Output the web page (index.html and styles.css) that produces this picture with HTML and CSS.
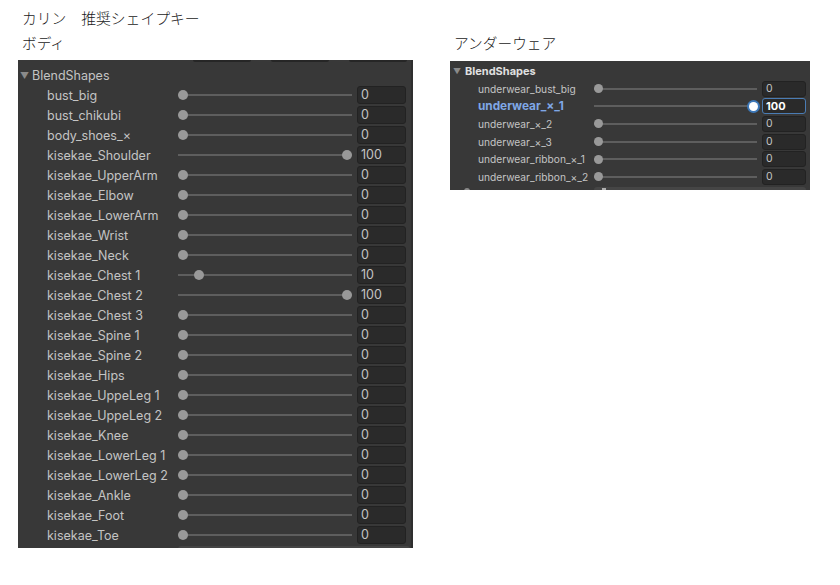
FILE: index.html
```html
<!DOCTYPE html>
<html lang="ja">
<head>
    <meta charset="UTF-8">
    <meta name="viewport" content="width=device-width, initial-scale=1.0">
    <title>カリン 推奨シェイプキー</title>
    <link rel="stylesheet" href="styles.css">
</head>
<body>
    <div class="page">
        <div class="title jp">カリン　推奨シェイプキー</div>
        <div class="columns">
            <!--ボディ-->
            <div class="col col_body">
                <div class="heading jp">ボディ</div>
                <div class="panel panel_body">
                    <div class="cut_top">
                        <span></span><span></span><span></span>
                    </div>
                    <div class="group"><span class="arrow">▼</span>BlendShapes</div>
                    <div class="row"><span class="label">bust_big</span><div class="slider"><div class="rail"><span class="knob" style="left:0%"></span></div></div><span class="field">0</span></div>
                    <div class="row"><span class="label">bust_chikubi</span><div class="slider"><div class="rail"><span class="knob" style="left:0%"></span></div></div><span class="field">0</span></div>
                    <div class="row"><span class="label">body_shoes_×</span><div class="slider"><div class="rail"><span class="knob" style="left:0%"></span></div></div><span class="field">0</span></div>
                    <div class="row"><span class="label">kisekae_Shoulder</span><div class="slider"><div class="rail"><span class="knob" style="left:100%"></span></div></div><span class="field">100</span></div>
                    <div class="row"><span class="label">kisekae_UpperArm</span><div class="slider"><div class="rail"><span class="knob" style="left:0%"></span></div></div><span class="field">0</span></div>
                    <div class="row"><span class="label">kisekae_Elbow</span><div class="slider"><div class="rail"><span class="knob" style="left:0%"></span></div></div><span class="field">0</span></div>
                    <div class="row"><span class="label">kisekae_LowerArm</span><div class="slider"><div class="rail"><span class="knob" style="left:0%"></span></div></div><span class="field">0</span></div>
                    <div class="row"><span class="label">kisekae_Wrist</span><div class="slider"><div class="rail"><span class="knob" style="left:0%"></span></div></div><span class="field">0</span></div>
                    <div class="row"><span class="label">kisekae_Neck</span><div class="slider"><div class="rail"><span class="knob" style="left:0%"></span></div></div><span class="field">0</span></div>
                    <div class="row"><span class="label">kisekae_Chest 1</span><div class="slider"><div class="rail"><span class="knob" style="left:10%"></span></div></div><span class="field">10</span></div>
                    <div class="row"><span class="label">kisekae_Chest 2</span><div class="slider"><div class="rail"><span class="knob" style="left:100%"></span></div></div><span class="field">100</span></div>
                    <div class="row"><span class="label">kisekae_Chest 3</span><div class="slider"><div class="rail"><span class="knob" style="left:0%"></span></div></div><span class="field">0</span></div>
                    <div class="row"><span class="label">kisekae_Spine 1</span><div class="slider"><div class="rail"><span class="knob" style="left:0%"></span></div></div><span class="field">0</span></div>
                    <div class="row"><span class="label">kisekae_Spine 2</span><div class="slider"><div class="rail"><span class="knob" style="left:0%"></span></div></div><span class="field">0</span></div>
                    <div class="row"><span class="label">kisekae_Hips</span><div class="slider"><div class="rail"><span class="knob" style="left:0%"></span></div></div><span class="field">0</span></div>
                    <div class="row"><span class="label">kisekae_UppeLeg 1</span><div class="slider"><div class="rail"><span class="knob" style="left:0%"></span></div></div><span class="field">0</span></div>
                    <div class="row"><span class="label">kisekae_UppeLeg 2</span><div class="slider"><div class="rail"><span class="knob" style="left:0%"></span></div></div><span class="field">0</span></div>
                    <div class="row"><span class="label">kisekae_Knee</span><div class="slider"><div class="rail"><span class="knob" style="left:0%"></span></div></div><span class="field">0</span></div>
                    <div class="row"><span class="label">kisekae_LowerLeg 1</span><div class="slider"><div class="rail"><span class="knob" style="left:0%"></span></div></div><span class="field">0</span></div>
                    <div class="row"><span class="label">kisekae_LowerLeg 2</span><div class="slider"><div class="rail"><span class="knob" style="left:0%"></span></div></div><span class="field">0</span></div>
                    <div class="row"><span class="label">kisekae_Ankle</span><div class="slider"><div class="rail"><span class="knob" style="left:0%"></span></div></div><span class="field">0</span></div>
                    <div class="row"><span class="label">kisekae_Foot</span><div class="slider"><div class="rail"><span class="knob" style="left:0%"></span></div></div><span class="field">0</span></div>
                    <div class="row"><span class="label">kisekae_Toe</span><div class="slider"><div class="rail"><span class="knob" style="left:0%"></span></div></div><span class="field">0</span></div>
                    <div class="cut_bottom"><span></span></div>
                </div>
            </div>
            <!--アンダーウェア-->
            <div class="col col_under">
                <div class="heading jp">アンダーウェア</div>
                <div class="panel panel_under">
                    <div class="group bold"><span class="arrow">▼</span>BlendShapes</div>
                    <div class="row"><span class="label">underwear_bust_big</span><div class="slider"><div class="rail"><span class="knob" style="left:0%"></span></div></div><span class="field">0</span></div>
                    <div class="row active"><span class="label">underwear_×_1</span><div class="slider"><div class="rail"><span class="knob" style="left:100%"></span></div></div><span class="field">100</span></div>
                    <div class="row"><span class="label">underwear_×_2</span><div class="slider"><div class="rail"><span class="knob" style="left:0%"></span></div></div><span class="field">0</span></div>
                    <div class="row"><span class="label">underwear_×_3</span><div class="slider"><div class="rail"><span class="knob" style="left:0%"></span></div></div><span class="field">0</span></div>
                    <div class="row"><span class="label">underwear_ribbon_×_1</span><div class="slider"><div class="rail"><span class="knob" style="left:0%"></span></div></div><span class="field">0</span></div>
                    <div class="row"><span class="label">underwear_ribbon_×_2</span><div class="slider"><div class="rail"><span class="knob" style="left:0%"></span></div></div><span class="field">0</span></div>
                    <div class="cut_bottom"><span class="cut_label"><i></i></span><span class="cut_field"><i></i></span></div>
                </div>
            </div>
        </div>
    </div>
</body>
</html>
```

FILE: styles.css
```css
body {
    margin: 0;
    background: #ffffff;
    font-family: Inter, "Noto Sans", sans-serif;
}
.jp {
    font-family: "Noto Sans CJK JP", sans-serif;
    color: #1a1a1a;
    font-weight: 300;
}
.page {
    padding-top: 8px;
}
.title {
    margin-left: 22px;
    height: 20px;
    line-height: 20px;
    font-size: 14.8px;
}
.columns {
    display: flex;
    gap: 37px;
    margin-left: 18px;
    margin-top: 5px;
}
.col_body {
    width: 395px;
}
.col_under {
    width: 360px;
}
.heading {
    padding-left: 4px;
    height: 20px;
    line-height: 20px;
    font-size: 14.7px;
}
.col_body .heading {
    margin-bottom: 7px;
}
.col_under .heading {
    margin-bottom: 8px;
}
.panel {
    background: #383838;
    color: #c4c4c4;
    display: flex;
    flex-direction: column;
    overflow: hidden;
}
.panel_body {
    height: 488px;
    border-right: 2px solid #2e2e2e;
    font-size: 12.5px;
}
.cut_top {
    height: 5px;
    flex: none;
    display: flex;
    gap: 20px;
    padding-left: 175px;
}
.cut_top span {
    width: 58px;
    height: 2px;
    background: #262626;
    border-radius: 0 0 3px 3px;
}
.group {
    display: flex;
    align-items: center;
    height: 20px;
    flex: none;
    padding-left: 2px;
}
.arrow {
    font-size: 9px;
    color: #8a8a8a;
    width: 12px;
}
.row {
    display: flex;
    align-items: center;
    height: 20px;
    flex: none;
}
.label {
    padding-left: 29px;
    width: 131px;
    flex: none;
    white-space: nowrap;
}
.slider {
    width: 174px;
    flex: none;
    height: 100%;
    position: relative;
}
.slider::before {
    content: "";
    position: absolute;
    left: 0;
    right: 0;
    top: 50%;
    height: 2px;
    margin-top: -1px;
    background: #5e5e5e;
}
.rail {
    position: relative;
    margin: 0 5px;
    height: 100%;
}
.knob {
    position: absolute;
    top: 50%;
    width: 10px;
    height: 10px;
    margin: -5px 0 0 -5px;
    border-radius: 50%;
    background: #999999;
}
.field {
    margin-left: 5px;
    width: 49px;
    height: 18px;
    box-sizing: border-box;
    background: #2a2a2a;
    border: 1px solid #222222;
    border-radius: 3px;
    padding-left: 3px;
    line-height: 16px;
    flex: none;
}
.panel_body .cut_bottom {
    height: 3px;
    flex: none;
    padding-left: 160px;
    padding-top: 1px;
}
.panel_body .cut_bottom span {
    display: block;
    width: 232px;
    height: 3px;
    background: #454545;
    border-radius: 3px 3px 0 0;
}

/* アンダーウェア */
.panel_under {
    height: 129px;
    font-size: 10.2px;
}
.panel_under .group {
    height: 19px;
    color: #e0e0e0;
    font-weight: 700;
    font-size: 11px;
    padding-left: 3px;
}
.panel_under .arrow {
    width: 12px;
    font-size: 8px;
    font-weight: 400;
}
.panel_under .row {
    height: 17.6px;
}
.panel_under .label {
    padding-left: 28px;
    width: 116px;
}
.panel_under .slider {
    width: 163px;
}
.panel_under .rail {
    margin: 0 4px;
}
.panel_under .knob {
    width: 9px;
    height: 9px;
    margin: -4.5px 0 0 -4.5px;
}
.panel_under .field {
    width: 44px;
    height: 16px;
    line-height: 14px;
    font-size: 10.5px;
}
.row.active .label {
    color: #7fa7e6;
    font-weight: 700;
    font-size: 11.8px;
}
.row.active .knob {
    background: #ffffff;
    box-shadow: 0 0 0 2px #3d78b8;
}
.row.active .field {
    border-color: #4a7cb4;
    color: #ffffff;
    font-weight: 700;
    font-size: 11px;
}
.panel_under .cut_bottom {
    display: flex;
    height: 4px;
    flex: none;
    padding-top: 1px;
    overflow: hidden;
}
.cut_label {
    padding-left: 14px;
    width: 130px;
    flex: none;
}
.cut_label i {
    display: block;
    width: 6px;
    height: 3px;
    margin-top: 1px;
    background: #8a8a8a;
    border-radius: 3px 3px 0 0;
}
.cut_field {
    width: 212px;
    height: 18px;
    background: #454545;
    border-radius: 3px;
    padding-left: 8px;
    box-sizing: border-box;
}
.cut_field i {
    display: block;
    width: 4px;
    height: 3px;
    margin-top: 1px;
    background: #b0b0b0;
}
```
